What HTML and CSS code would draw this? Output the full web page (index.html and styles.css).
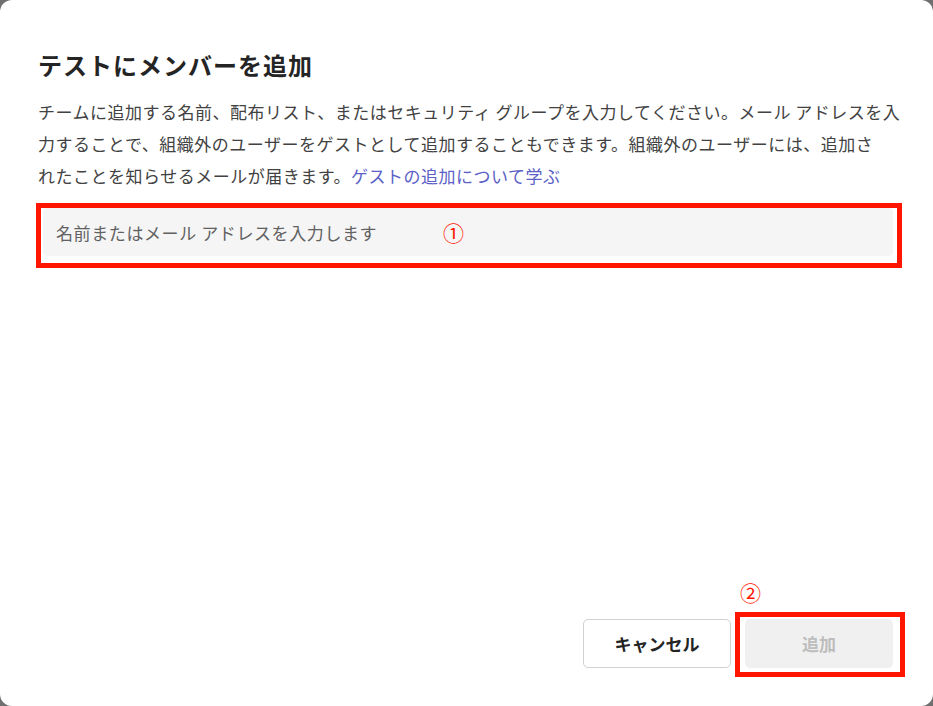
FILE: index.html
```html
<!DOCTYPE html>
<html lang="ja">
<head>
    <title>メンバーを追加</title>
    <meta name="viewport" content="width=device-width, initial-scale=1.0">
    <link rel="stylesheet" href="styles.css">
</head>
<body>
    <div class="dialog">
        <h2 class="title">テストにメンバーを追加</h2>
        <p class="desc">
            チームに追加する名前、配布リスト、またはセキュリティ グループを入力してください。メール アドレスを入<br>力することで、組織外のユーザーをゲストとして追加することもできます。組織外のユーザーには、追加さ<br>れたことを知らせるメールが届きます。<a href="#" class="link">ゲストの追加について学ぶ</a>
        </p>
        <div class="field">
            <input class="search" type="text" placeholder="名前またはメール アドレスを入力します">
            <span class="mark mark-field"></span>
            <span class="num num-1">①</span>
        </div>
        <div class="spacer"></div>
        <div class="actions">
            <button class="btn btn-cancel">キャンセル</button>
            <div class="add-wrap">
                <button class="btn btn-add" disabled>追加</button>
                <span class="mark mark-add"></span>
                <span class="num num-2">②</span>
            </div>
        </div>
    </div>
</body>
</html>
```

FILE: styles.css
```css
html {
    background-color: #6f6f6f;
}
body {
    margin: 0;
    font-family: "Noto Sans CJK JP", "Noto Sans", sans-serif;
}
.dialog {
    background: #ffffff;
    height: 100vh;
    box-sizing: border-box;
    border-radius: 12px;
    padding: 49px 40px 38px 38px;
    display: flex;
    flex-direction: column;
}
.title {
    margin: 0;
    font-size: 24px;
    line-height: 32px;
    font-weight: 700;
    letter-spacing: 1px;
    color: #242424;
}
.desc {
    margin: 15px 0 0 0;
    font-size: 17px;
    line-height: 32px;
    letter-spacing: 0.5px;
    color: #424242;
    white-space: nowrap;
}
.link {
    color: #5b5fc7;
    text-decoration: none;
}
.field {
    position: relative;
    margin: 16px 0 0 5px;
}
.search {
    display: block;
    width: 100%;
    height: 48px;
    box-sizing: border-box;
    border: none;
    border-radius: 4px;
    background: #f5f5f5;
    padding: 0 13px;
    font-family: inherit;
    font-size: 17px;
    letter-spacing: 0.6px;
    outline: none;
}
.search::placeholder {
    color: #616161;
}
/* red annotation frames */
.mark {
    position: absolute;
    border: 5px solid #ff1500;
    pointer-events: none;
}
.mark-field {
    top: -5px;
    left: -7px;
    right: -9px;
    bottom: -12px;
}
.num {
    position: absolute;
    color: #ff1500;
    font-size: 21px;
    line-height: 22px;
}
.num-1 {
    left: 400px;
    top: 13px;
}
.spacer {
    flex: 1;
}
.actions {
    display: flex;
    justify-content: flex-end;
    gap: 14px;
}
.btn {
    width: 148px;
    height: 49px;
    border-radius: 5px;
    font-family: inherit;
    font-size: 17px;
    font-weight: 700;
}
.btn-cancel {
    background: #ffffff;
    border: 1px solid #d1d1d1;
    color: #242424;
}
.add-wrap {
    position: relative;
}
.btn-add {
    background: #f0f0f0;
    border: none;
    color: #bdbdbd;
}
.mark-add {
    top: -7px;
    left: -10px;
    right: -12px;
    bottom: -9px;
}
.num-2 {
    left: -5px;
    top: -38px;
}
```
